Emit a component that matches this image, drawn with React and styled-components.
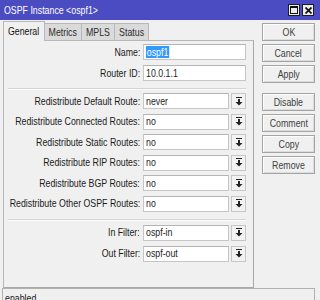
import React from "react";
import styled, { createGlobalStyle } from "styled-components";

const GlobalStyle = createGlobalStyle`
  html, body {
    margin: 0;
    padding: 0;
    background: #f0f0f0;
  }
  body {
    font-family: "Liberation Sans", Arial, sans-serif;
    font-size: 11px;
    color: #1e1e1e;
  }
`;

// winbox draws a narrow face, so text is squeezed horizontally
const Txt = styled.span`
  display: inline-block;
  white-space: nowrap;
  line-height: 13px;
  transform: scaleX(0.8);
  transform-origin: ${p => p.$origin || "left"} center;
`;

const Window = styled.div`
  width: 320px;
  height: 300px;
  overflow: hidden;
  display: flex;
  flex-direction: column;
  background: #f0f0f0;
`;

const TitleBar = styled.div`
  height: 20px;
  flex-shrink: 0;
  background: #4b4bc2;
  color: #fff;
  display: flex;
  align-items: center;
  padding-left: 4px;
  padding-right: 6px;
`;

const Title = styled.div`
  flex: 1;
`;

const TitleButton = styled.div`
  width: 10px;
  height: 10px;
  background: #ececec;
  border: 1px solid #1c1c1c;
  margin-left: 2px;
  display: flex;
  align-items: center;
  justify-content: center;
`;

const Body = styled.div`
  height: 268px;
  flex-shrink: 0;
  display: flex;
  padding: 1px 0 0 3px;
  box-sizing: border-box;
  gap: 8px;
`;

const LeftSide = styled.div`
  width: 251px;
  display: flex;
  flex-direction: column;
`;

const TabRow = styled.div`
  display: flex;
  align-items: flex-end;
  height: 19px;
`;

const Tab = styled.div`
  width: ${p => p.$w}px;
  height: ${p => (p.$active ? "20px" : "17px")};
  margin-bottom: ${p => (p.$active ? "-1px" : "0")};
  box-sizing: border-box;
  display: flex;
  align-items: center;
  justify-content: center;
  background: ${p => (p.$active ? "#f0f0f0" : "#dadada")};
  border: 1px solid #b8b8b8;
  border-bottom: none;
  border-left-width: ${p => (p.$first ? "1px" : "0")};
  color: ${p => (p.$active ? "#111" : "#2c2c2c")};
  position: relative;
  z-index: ${p => (p.$active ? 1 : 0)};
`;

const Panel = styled.div`
  height: 248px;
  box-sizing: border-box;
  border: 1px solid #b8b8b8;
  border-right-color: #a8a8a8;
  border-bottom-color: #a8a8a8;
  padding: 3px 7px 0 5px;
  display: flex;
  flex-direction: column;
`;

const Group = styled.div`
  display: flex;
  flex-direction: column;
  gap: ${p => p.$gap || "5px"};
`;

const Separator = styled.div`
  height: 0;
  border-top: 1px solid #d4d4d4;
  border-bottom: 1px solid #fbfbfb;
  margin: 7px 0 ${p => p.$after || "3px"} -1px;
`;

const Row = styled.div`
  display: flex;
  align-items: center;
  height: 16px;
`;

const Label = styled.div`
  width: 134px;
  flex-shrink: 0;
  box-sizing: border-box;
  padding-right: 3px;
  display: flex;
  justify-content: flex-end;
  color: #1a1a1a;
`;

const Input = styled.div`
  flex: 1;
  min-width: 0;
  height: 16px;
  box-sizing: border-box;
  background: #fff;
  border: 1px solid #c6c6c6;
  border-top-color: #b4b4b4;
  display: flex;
  align-items: center;
  padding-left: 2px;
  overflow: hidden;
`;

const Selected = styled.span`
  background: #3399ff;
  color: #fff;
  padding: 0 1px;
`;

const DropButton = styled.div`
  width: 15px;
  height: 16px;
  flex-shrink: 0;
  box-sizing: border-box;
  margin-left: 2px;
  border: 1px solid #c6c6c6;
  background: #f2f2f2;
  display: flex;
  align-items: center;
  justify-content: center;
`;

const Buttons = styled.div`
  width: 53px;
  padding-top: 2px;
  display: flex;
  flex-direction: column;
  gap: 3px;
`;

const Button = styled.div`
  height: 18px;
  box-sizing: border-box;
  border: 1px solid #a4a4a4;
  box-shadow: inset 1px 1px 0 #fdfdfd, inset -1px -1px 0 #dcdcdc;
  background: #f0f0f0;
  display: flex;
  align-items: center;
  justify-content: center;
  color: #404040;
  margin-top: ${p => (p.$spaced ? "7px" : "0")};
`;

const StatusBar = styled.div`
  flex: 1;
  margin: 0 5px 0 2px;
  border: 1px solid #b0b0b0;
  border-bottom: none;
  padding: 3px 0 0 2px;
  color: #1a1a1a;
`;

const DropIcon = () => (
  <svg width="8" height="9" viewBox="0 0 8 9">
    <rect x="1" y="0" width="6" height="1" fill="#222" />
    <rect x="3" y="2" width="2" height="3" fill="#222" />
    <polygon points="0.5,5 7.5,5 4,8.5" fill="#222" />
  </svg>
);

const TextRow = ({ label, children }) => (
  <Row>
    <Label>
      <Txt $origin="right">{label}</Txt>
    </Label>
    <Input>
      <Txt>{children}</Txt>
    </Input>
  </Row>
);

const DropRow = ({ label, value }) => (
  <Row>
    <Label>
      <Txt $origin="right">{label}</Txt>
    </Label>
    <Input>
      <Txt>{value}</Txt>
    </Input>
    <DropButton>
      <DropIcon />
    </DropButton>
  </Row>
);

const tabs = [
  ["General", 42],
  ["Metrics", 37],
  ["MPLS", 33],
  ["Status", 34],
];

const redistribute = [
  ["Redistribute Default Route:", "never"],
  ["Redistribute Connected Routes:", "no"],
  ["Redistribute Static Routes:", "no"],
  ["Redistribute RIP Routes:", "no"],
  ["Redistribute BGP Routes:", "no"],
  ["Redistribute Other OSPF Routes:", "no"],
];

const actions = ["OK", "Cancel", "Apply", "Disable", "Comment", "Copy", "Remove"];

const App = () => (
  <Window>
    <GlobalStyle />
    <TitleBar>
      <Title>
        <Txt>OSPF Instance &lt;ospf1&gt;</Txt>
      </Title>
      <TitleButton>
        <svg width="8" height="8" viewBox="0 0 8 8">
          <rect x="0.5" y="0.5" width="7" height="7" fill="none" stroke="#111" />
          <rect x="0" y="0" width="8" height="2" fill="#111" />
        </svg>
      </TitleButton>
      <TitleButton>
        <svg width="7" height="7" viewBox="0 0 7 7">
          <path d="M0.5 0.5 L6.5 6.5 M6.5 0.5 L0.5 6.5" stroke="#111" strokeWidth="1.7" />
        </svg>
      </TitleButton>
    </TitleBar>
    <Body>
      <LeftSide>
        <TabRow>
          {tabs.map(([name, w], i) => (
            <Tab key={name} $w={w} $active={i === 0} $first={i === 0}>
              <Txt $origin="center">{name}</Txt>
            </Tab>
          ))}
        </TabRow>
        <Panel>
          <Group>
            <TextRow label="Name:">
              <Selected>ospf1</Selected>
            </TextRow>
            <TextRow label="Router ID:">10.0.1.1</TextRow>
          </Group>
          <Separator />
          <Group $gap="4.6px">
            {redistribute.map(([label, value]) => (
              <DropRow key={label} label={label} value={value} />
            ))}
          </Group>
          <Separator $after="4px" />
          <Group>
            <DropRow label="In Filter:" value="ospf-in" />
            <DropRow label="Out Filter:" value="ospf-out" />
          </Group>
        </Panel>
      </LeftSide>
      <Buttons>
        {actions.map(name => (
          <Button key={name} $spaced={name === "Disable"}>
            <Txt $origin="center">{name}</Txt>
          </Button>
        ))}
      </Buttons>
    </Body>
    <StatusBar>
      <Txt>enabled</Txt>
    </StatusBar>
  </Window>
);

export default App;
